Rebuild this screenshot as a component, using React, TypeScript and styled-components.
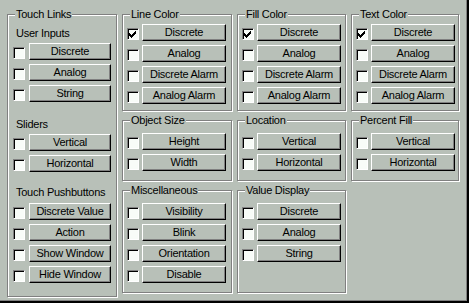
import styled, { createGlobalStyle } from "styled-components";

const FACE = "#b8c0b8";

const GlobalStyle = createGlobalStyle`
  html, body {
    margin: 0;
    padding: 0;
    background: ${FACE};
  }
  body {
    font-family: "Liberation Sans", Arial, sans-serif;
    font-size: 11px;
    color: #000;
  }
`;

const Panel = styled.div`
  box-sizing: border-box;
  width: 469px;
  height: 303px;
  background: ${FACE};
  border-right: 2px solid #000;
  border-bottom: 2px solid #000;
  box-shadow: inset -1px -1px 0 #808080;
  padding: 14px 0 0 7px;
  display: grid;
  grid-template-columns: 110px 110px 109px 108px;
  grid-template-rows: 97px 61px 103px;
  column-gap: 5px;
  row-gap: 9px;
  align-items: start;
`;

interface GroupProps {
  $col: number;
  $row: string;
  $height: number;
  $padTop: number;
  $indent?: number;
}

const Group = styled.div<GroupProps>`
  position: relative;
  box-sizing: border-box;
  grid-column: ${(p) => p.$col};
  grid-row: ${(p) => p.$row};
  height: ${(p) => p.$height}px;
  border: 1px solid #808080;
  box-shadow: inset 1px 1px 0 #fff, 1px 1px 0 #fff;
  padding: ${(p) => p.$padTop}px 0 0 ${(p) => p.$indent ?? 4}px;
  display: flex;
  flex-direction: column;
  gap: 4px;
`;

const Title = styled.span`
  position: absolute;
  top: -7px;
  left: 7px;
  padding: 0 1px;
  line-height: 13px;
  letter-spacing: -0.25px;
  background: ${FACE};
  white-space: nowrap;
`;

const SubLabel = styled.div<{ $top: number; $bottom: number }>`
  margin: ${(p) => p.$top}px 0 ${(p) => p.$bottom}px 3px;
  line-height: 13px;
  letter-spacing: -0.25px;
  white-space: nowrap;
`;

const Row = styled.div<{ $gap: number }>`
  display: flex;
  align-items: center;
  gap: ${(p) => p.$gap}px;
  height: 17px;
`;

const CheckBox = styled.span`
  box-sizing: border-box;
  width: 12px;
  height: 12px;
  margin-top: 2px;
  flex: none;
  display: flex;
  border: 1px solid;
  border-color: #808080 #fff #fff #808080;
  box-shadow: inset 1px 1px 0 #000;
  background: #f8fcf8;
  padding: 1px 0 0 1px;
`;

const PushButton = styled.button<{ $width: number }>`
  box-sizing: border-box;
  width: ${(p) => p.$width}px;
  height: 17px;
  margin: 0;
  padding: 0 0 1px;
  flex: none;
  background: ${FACE};
  border: 1px solid;
  border-color: #fff #000 #000 #fff;
  box-shadow: inset -1px -1px 0 #808080;
  font-family: "Liberation Sans", Arial, sans-serif;
  font-size: 11px;
  letter-spacing: -0.25px;
  line-height: 14px;
  color: #000;
  white-space: nowrap;
`;

const CHECK = [
  "......#",
  ".....##",
  "#...###",
  "##.###.",
  "#####..",
  ".###...",
  "..#....",
];

const checkPath = CHECK.flatMap((line, y) =>
  line.split("").map((c, x) => (c === "#" ? `M${x} ${y + 1}h1v1h-1z` : ""))
).join("");

const CheckMark = () => (
  <svg width="8" height="8" viewBox="0 0 8 8" shapeRendering="crispEdges">
    <path d={checkPath} fill="#000" />
  </svg>
);

interface Item {
  label: string;
  checked?: boolean;
}

const LinkRow = ({ item, wide }: { item: Item; wide: boolean }) => (
  <Row $gap={wide ? 3 : 4}>
    <CheckBox>{item.checked && <CheckMark />}</CheckBox>
    <PushButton $width={wide ? 84 : 82}>{item.label}</PushButton>
  </Row>
);

const items = (labels: string[], firstChecked = false): Item[] =>
  labels.map((label, i) => ({ label, checked: firstChecked && i === 0 }));

const colorItems = ["Discrete", "Analog", "Discrete Alarm", "Analog Alarm"];

interface GroupDef {
  title: string;
  col: number;
  row: string;
  height: number;
  padTop: number;
  items: Item[];
}

const groups: GroupDef[] = [
  { title: "Line Color", col: 2, row: "1", height: 97, padTop: 9, items: items(colorItems, true) },
  { title: "Fill Color", col: 3, row: "1", height: 97, padTop: 9, items: items(colorItems, true) },
  { title: "Text Color", col: 4, row: "1", height: 97, padTop: 9, items: items(colorItems, true) },
  { title: "Object Size", col: 2, row: "2", height: 61, padTop: 12, items: items(["Height", "Width"]) },
  { title: "Location", col: 3, row: "2", height: 61, padTop: 12, items: items(["Vertical", "Horizontal"]) },
  { title: "Percent Fill", col: 4, row: "2", height: 61, padTop: 12, items: items(["Vertical", "Horizontal"]) },
  {
    title: "Miscellaneous",
    col: 2,
    row: "3",
    height: 103,
    padTop: 12,
    items: items(["Visibility", "Blink", "Orientation", "Disable"]),
  },
  {
    title: "Value Display",
    col: 3,
    row: "3",
    height: 103,
    padTop: 12,
    items: items(["Discrete", "Analog", "String"]),
  },
];

const touchSections = [
  { label: "User Inputs", top: 0, bottom: -1, items: items(["Discrete", "Analog", "String"]) },
  { label: "Sliders", top: 12, bottom: -1, items: items(["Vertical", "Horizontal"]) },
  {
    label: "Touch Pushbuttons",
    top: 10,
    bottom: 0,
    items: items(["Discrete Value", "Action", "Show Window", "Hide Window"]),
  },
];

export default function App() {
  return (
    <>
      <GlobalStyle />
      <Panel>
        <Group $col={1} $row="1 / span 3" $height={283} $padTop={12} $indent={5}>
          <Title>Touch Links</Title>
          {touchSections.map((s) => [
            <SubLabel key={s.label} $top={s.top} $bottom={s.bottom}>
              {s.label}
            </SubLabel>,
            ...s.items.map((it) => <LinkRow key={s.label + it.label} item={it} wide={false} />),
          ])}
        </Group>
        {groups.map((g) => (
          <Group key={g.title} $col={g.col} $row={g.row} $height={g.height} $padTop={g.padTop}>
            <Title>{g.title}</Title>
            {g.items.map((it) => (
              <LinkRow key={it.label} item={it} wide />
            ))}
          </Group>
        ))}
      </Panel>
    </>
  );
}
